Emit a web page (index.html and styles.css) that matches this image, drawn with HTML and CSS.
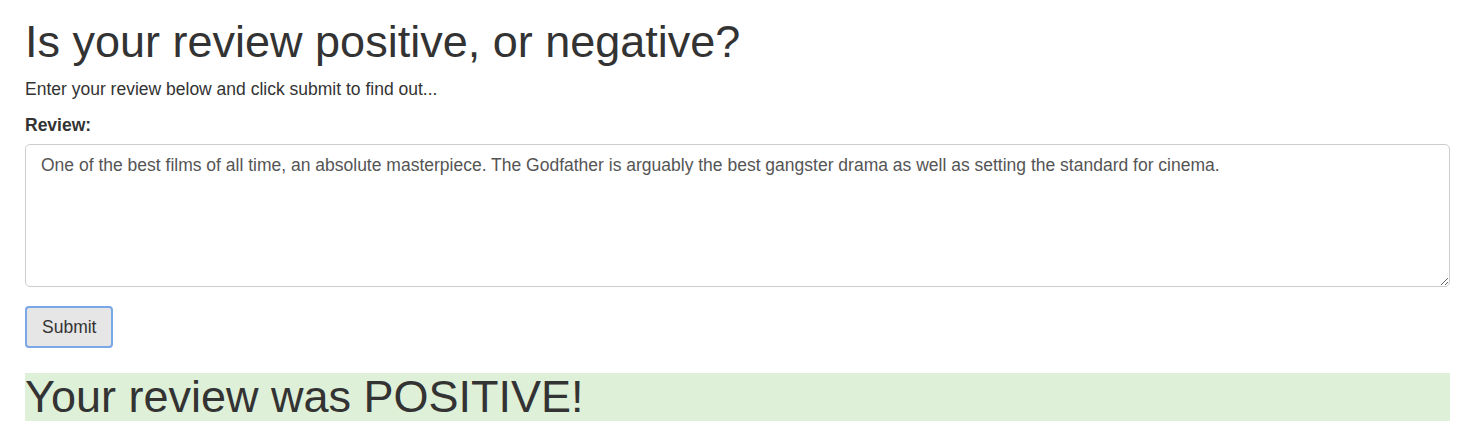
FILE: index.html
```html
<!DOCTYPE html>
<html>
<head>
<meta charset="utf-8">
<link rel="stylesheet" href="styles.css">
</head>
<body>
<div class="page">
  <h1 class="title">Is your review positive, or negative?</h1>
  <p class="intro">Enter your review below and click submit to find out...</p>
  <form class="form">
    <label class="label" for="review">Review:</label>
    <textarea id="review" class="review">One of the best films of all time, an absolute masterpiece. The Godfather is arguably the best gangster drama as well as setting the standard for cinema.</textarea>
    <div class="actions"><button type="button" class="btn">Submit</button></div>
  </form>
  <h2 class="result">Your review was POSITIVE!</h2>
</div>
</body>
</html>
```
FILE: styles.css
```css
* { box-sizing: border-box; }
html, body { margin: 0; padding: 0; background: #fff; }
body {
  font-family: "Liberation Sans", Arial, Helvetica, sans-serif;
  font-size: 17.5px;
  line-height: 1.42857;
  color: #333;
}
.page { padding: 0 29px 0 25px; }
.title {
  font-size: 45px;
  font-weight: 400;
  line-height: 1.1;
  margin: 17px 0 10px;
}
.intro { margin: 0 0 12px; font-size: 17.5px; }
.form { display: flex; flex-direction: column; }
.label { font-weight: 700; font-size: 17.5px; margin-bottom: 6px; }
.review {
  display: block;
  width: 100%;
  height: 143px;
  padding: 8px 15px;
  font-family: inherit;
  font-size: 17.5px;
  line-height: 1.42857;
  color: #555;
  border: 1px solid #ccc;
  border-radius: 5px;
  resize: vertical;
}
.actions { margin-top: 19px; }
.btn {
  height: 42px;
  padding: 0 15px;
  font-family: inherit;
  font-size: 17.5px;
  color: #333;
  background: #e6e6e6;
  border: 2px solid #7aa7e8;
  border-radius: 4px;
}
.result {
  margin: 25px 0 0;
  background: #dff0d8;
  font-size: 45px;
  font-weight: 400;
  line-height: 48px;
  height: 48px;
}
```
